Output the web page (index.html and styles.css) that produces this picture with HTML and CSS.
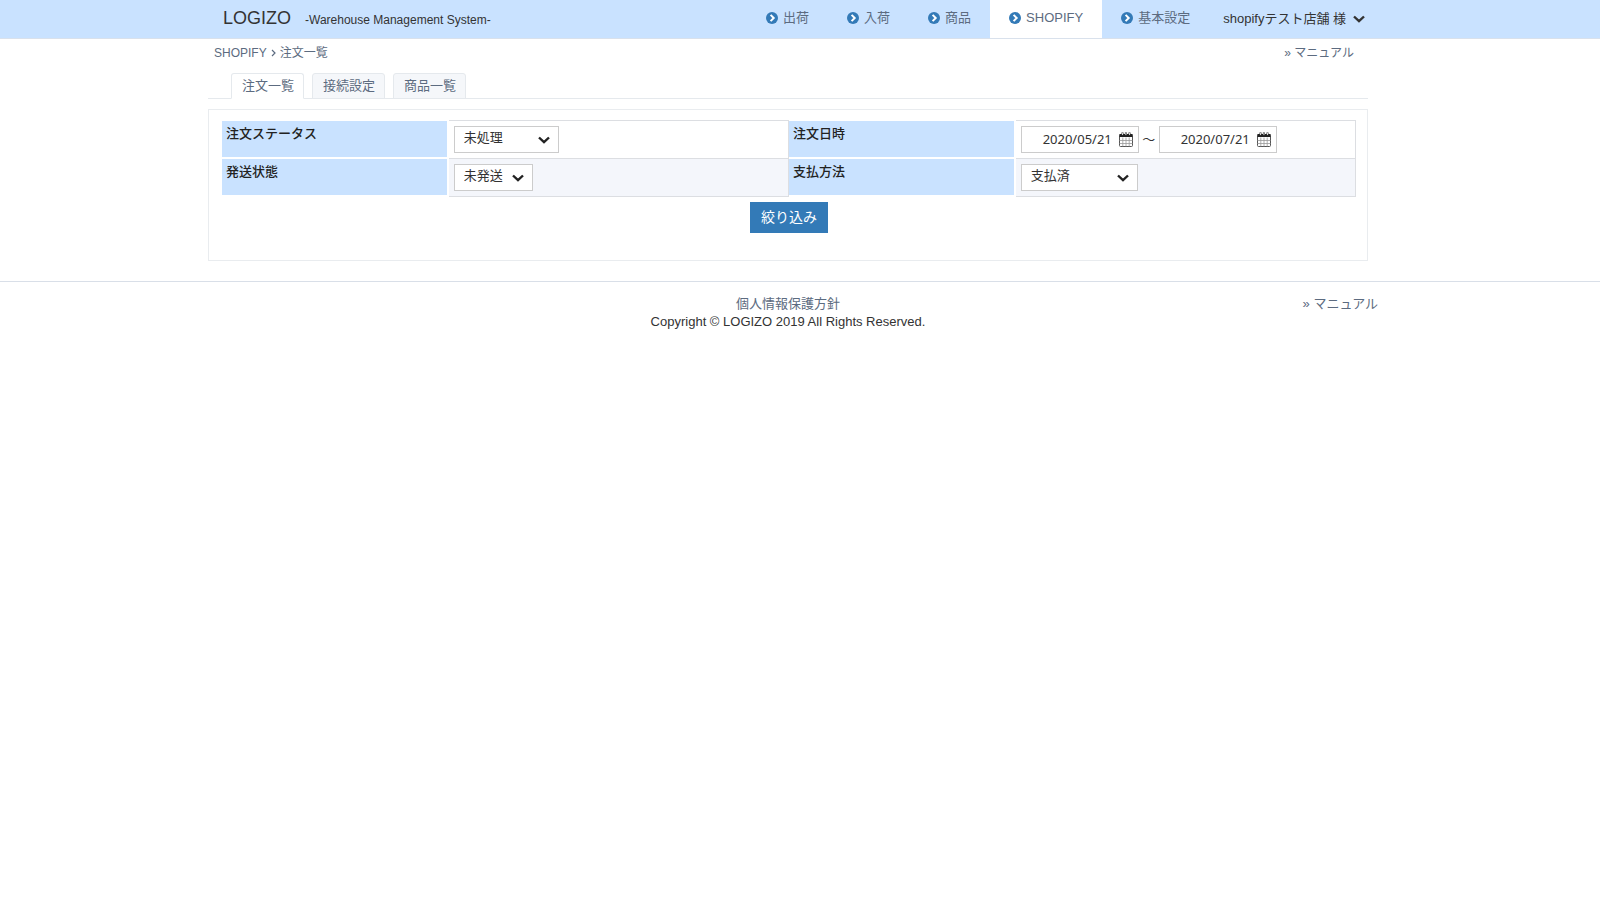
FILE: index.html
```html
<!DOCTYPE html>
<html lang="ja">
<head>
<meta charset="utf-8">
<meta name="viewport" content="width=device-width, initial-scale=1">
<title>注文一覧 | LOGIZO</title>
<link rel="stylesheet" href="styles.css">
</head>
<body>
<svg class="sprite" aria-hidden="true">
  <symbol id="go" viewBox="0 0 12 12"><circle cx="6" cy="6" r="6" fill="#337ab7"/><path d="M4.6 2.9 7.7 6 4.6 9.1" fill="none" stroke="#fff" stroke-width="2"/></symbol>
  <symbol id="down" viewBox="0 0 12 8"><path d="M1 1.5 6 6.2 11 1.5" fill="none" stroke="currentColor" stroke-width="2.4"/></symbol>
  <symbol id="calendar" viewBox="0 0 14 15">
    <rect x="0.5" y="2.5" width="13" height="12" rx="1" fill="#fff" stroke="#555"/>
    <path d="M0.5 2h13v3h-13z" fill="#222"/>
    <path d="M3.5 0.5v3M6.9 0.5v3M10.5 0.5v3" stroke="#333" stroke-width="2"/>
    <path d="M3.5 1v2M6.9 1v2M10.5 1v2" stroke="#fff" stroke-width="0.8"/>
    <path d="M3.8 5.5v9M7 5.5v9M10.2 5.5v9M0.5 8.5h13M0.5 11.5h13" stroke="#999" stroke-width="0.8"/>
  </symbol>
</svg>
<header class="header">
  <div class="container header-row">
    <h1 class="brand">LOGIZO</h1>
    <p class="tagline">-Warehouse Management System-</p>
    <nav class="nav">
      <a class="nav-item" href="#"><svg class="go"><use href="#go"/></svg>出荷</a>
      <a class="nav-item" href="#"><svg class="go"><use href="#go"/></svg>入荷</a>
      <a class="nav-item" href="#"><svg class="go"><use href="#go"/></svg>商品</a>
      <a class="nav-item active" href="#" aria-current="page"><svg class="go"><use href="#go"/></svg>SHOPIFY</a>
      <a class="nav-item" href="#"><svg class="go"><use href="#go"/></svg>基本設定</a>
    </nav>
    <button class="user" type="button">shopifyテスト店舗 様<svg class="down"><use href="#down"/></svg></button>
  </div>
</header>
<main class="container">
  <div class="crumb-row">
    <nav class="crumbs"><a href="#">SHOPIFY</a><svg class="sep" viewBox="0 0 5 8"><path d="M1 1l3 3-3 3" fill="none" stroke="#5c6b80" stroke-width="1.2"/></svg><a href="#">注文一覧</a></nav>
    <a href="#">» マニュアル</a>
  </div>
  <nav class="tabs">
    <a class="tab current" href="#">注文一覧</a>
    <a class="tab" href="#">接続設定</a>
    <a class="tab" href="#">商品一覧</a>
  </nav>
  <form class="panel">
    <table class="filters">
      <tr>
        <th><label for="status">注文ステータス</label></th>
        <td><span class="select w-status"><select id="status"><option>未処理</option></select><svg class="down"><use href="#down"/></svg></span></td>
        <th><label for="from">注文日時</label></th>
        <td>
          <div class="range">
            <span class="date"><input id="from" type="text" value="2020/05/21"><button type="button" aria-label="開始日を選択"><svg class="calendar"><use href="#calendar"/></svg></button></span>
            <span class="tilde">～</span>
            <span class="date"><input type="text" value="2020/07/21" aria-label="注文日時（終了）"><button type="button" aria-label="終了日を選択"><svg class="calendar"><use href="#calendar"/></svg></button></span>
          </div>
        </td>
      </tr>
      <tr>
        <th><label for="shipping">発送状態</label></th>
        <td><span class="select w-shipping"><select id="shipping"><option>未発送</option></select><svg class="down"><use href="#down"/></svg></span></td>
        <th><label for="payment">支払方法</label></th>
        <td><span class="select w-payment"><select id="payment"><option>支払済</option></select><svg class="down"><use href="#down"/></svg></span></td>
      </tr>
    </table>
    <button class="submit" type="submit">絞り込み</button>
  </form>
</main>
<footer class="footer">
  <div class="container footer-row">
    <div class="legal">
      <a href="#">個人情報保護方針</a>
      <p>Copyright © LOGIZO 2019 All Rights Reserved.</p>
    </div>
    <a class="manual" href="#">» マニュアル</a>
  </div>
</footer>
</body>
</html>
```
FILE: styles.css
```css
* { box-sizing: border-box; }
body {
  margin: 0;
  background: #fff;
  color: #333;
  font: 13px/18px "Liberation Sans", "Noto Sans CJK JP", sans-serif;
}
h1, p { margin: 0; font-weight: normal; }
a { color: #5c6b80; text-decoration: none; }
button, input, select { font: inherit; color: inherit; margin: 0; }
.sprite { position: absolute; width: 0; height: 0; }

.header, main, .footer { padding-right: 24px; }
.container { max-width: 1160px; margin: 0 auto; }
main.container { max-width: 1184px; }

.header { background: #c9e2ff; border-bottom: 1px solid #d9e1ec; }
.header-row { display: flex; min-height: 38px; padding: 0 3px 0 15px; }
.brand { font-size: 18px; line-height: 36px; }
.tagline { margin-left: 14px; padding-top: 2px; font-size: 12px; line-height: 36px; }
.nav { display: flex; margin-left: auto; }
.nav-item { display: flex; align-items: center; gap: 5px; padding: 0 19px 2px; }
.nav-item.active { background: #fff; }
.go { width: 12px; height: 12px; }
.down { width: 12px; height: 8px; }
.user { display: flex; align-items: center; gap: 7px; padding: 0 0 0 14px; border: 0; background: none; }

.crumb-row { display: flex; justify-content: space-between; padding: 5px 14px 0 6px; font-size: 12px; line-height: 18px; }
.crumbs { display: flex; align-items: center; gap: 4px; }
.sep { width: 5px; height: 8px; }

.tabs { display: flex; gap: 8px; margin-top: 11px; padding-left: 23px; border-bottom: 1px solid #e5e9ed; }
.tab { padding: 3px 9px 3px 10px; border: 1px solid #e5e9ed; border-radius: 3px 3px 0 0; background: #f5f7fa; margin-bottom: -1px; }
.tab.current { background: #fff; border-bottom-color: #fff; }

.panel { margin-top: 10px; padding: 10px 11px 27px 13px; border: 1px solid #e9ecef; text-align: center; }
.filters { width: 100%; border-spacing: 0; table-layout: fixed; text-align: left; }
.filters th {
  width: 20%;
  padding: 4px 5px 4px 4px;
  border: solid #fff;
  border-width: 0 2px 2px 0;
  background: #c9e2ff;
  background-clip: padding-box;
  vertical-align: top;
  font-weight: 500;
  color: #222;
}
.filters td { padding: 5px; border: solid #dcdee2; border-width: 0 1px 1px 0; }
.filters tr:first-child th, .filters tr:first-child td { border-top-width: 1px; }
.filters tr:last-child td { background: #f4f6fb; }
.select { position: relative; display: block; }
.w-status { width: 105px; }
.w-shipping { width: 79px; }
.w-payment { width: 117px; }
.select select {
  appearance: none;
  display: block;
  width: 100%;
  height: 27px;
  padding: 0 24px 3px 9px;
  border: 1px solid #ccc;
  border-radius: 0;
  background: #fff;
}
.select .down { position: absolute; right: 9px; top: 10px; color: #222; pointer-events: none; }
.range { display: flex; align-items: center; }
.date { display: flex; align-items: center; width: 118px; height: 27px; padding-right: 5px; border: 1px solid #ccc; background: #fff; }
.date input { flex: 1; min-width: 0; padding: 0 7px 2px 0; border: 0; background: none; text-align: right; font-family: "Noto Sans", sans-serif; }
.date button { display: flex; padding: 0; border: 0; background: none; }
.calendar { width: 14px; height: 15px; }
.tilde { width: 20px; text-align: center; }
.submit { margin-top: 5px; padding: 5px 11px 6px; border: 0; background: #337ab7; color: #fff; font-size: 14px; line-height: 20px; }

.footer { margin-top: 20px; border-top: 1px solid #d9dfe8; }
.footer-row { display: grid; grid-template-columns: 1fr auto 1fr; padding-top: 13px; }
.legal { grid-column: 2; text-align: center; }
.manual { justify-self: end; margin-right: -10px; }
```
